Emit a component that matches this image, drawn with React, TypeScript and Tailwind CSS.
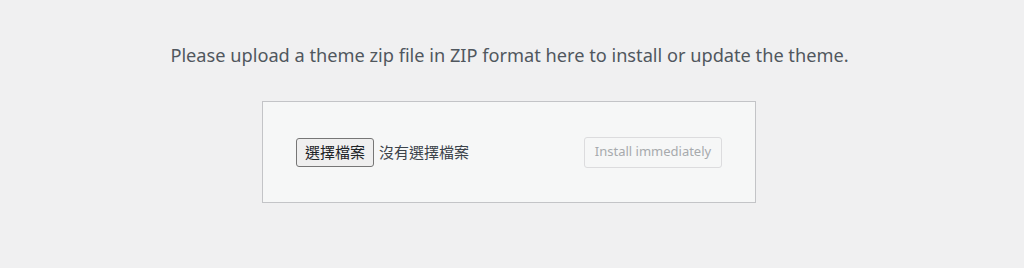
import React from 'react';

export default function App() {
  return (
    <div className="w-[1024px] h-[268px] bg-[#f0f0f1] font-['Segoe_UI','Noto_Sans','Noto_Sans_CJK_TC',sans-serif] pt-[41px]">
      <p className="text-center text-[18.2px] leading-[28px] text-[#50575e] pr-[5px]">
        Please upload a theme zip file in ZIP format here to install or update the theme.
      </p>

      {/* upload form */}
      <div className="ml-[262px] mt-[32px] w-[494px] h-[102px] border border-[#c3c4c7] bg-[#f6f7f7] flex items-center justify-between pl-[33px] pr-[33px]">
        <div className="flex items-center gap-[5px] text-[15px] font-['Noto_Sans_CJK_TC',sans-serif]">
          <button className="h-[29px] w-[78px] border border-[#767676] rounded-[3px] bg-[#efefef] text-[#1d2327]">
            選擇檔案
          </button>
          <span className="text-[#3c434a]">沒有選擇檔案</span>
        </div>
        <button
          disabled
          className="h-[31px] w-[138px] border border-[#dcdcde] rounded-[3px] bg-[#f6f7f7] text-[13px] text-[#a7aaad]"
        >
          Install immediately
        </button>
      </div>
    </div>
  );
}
